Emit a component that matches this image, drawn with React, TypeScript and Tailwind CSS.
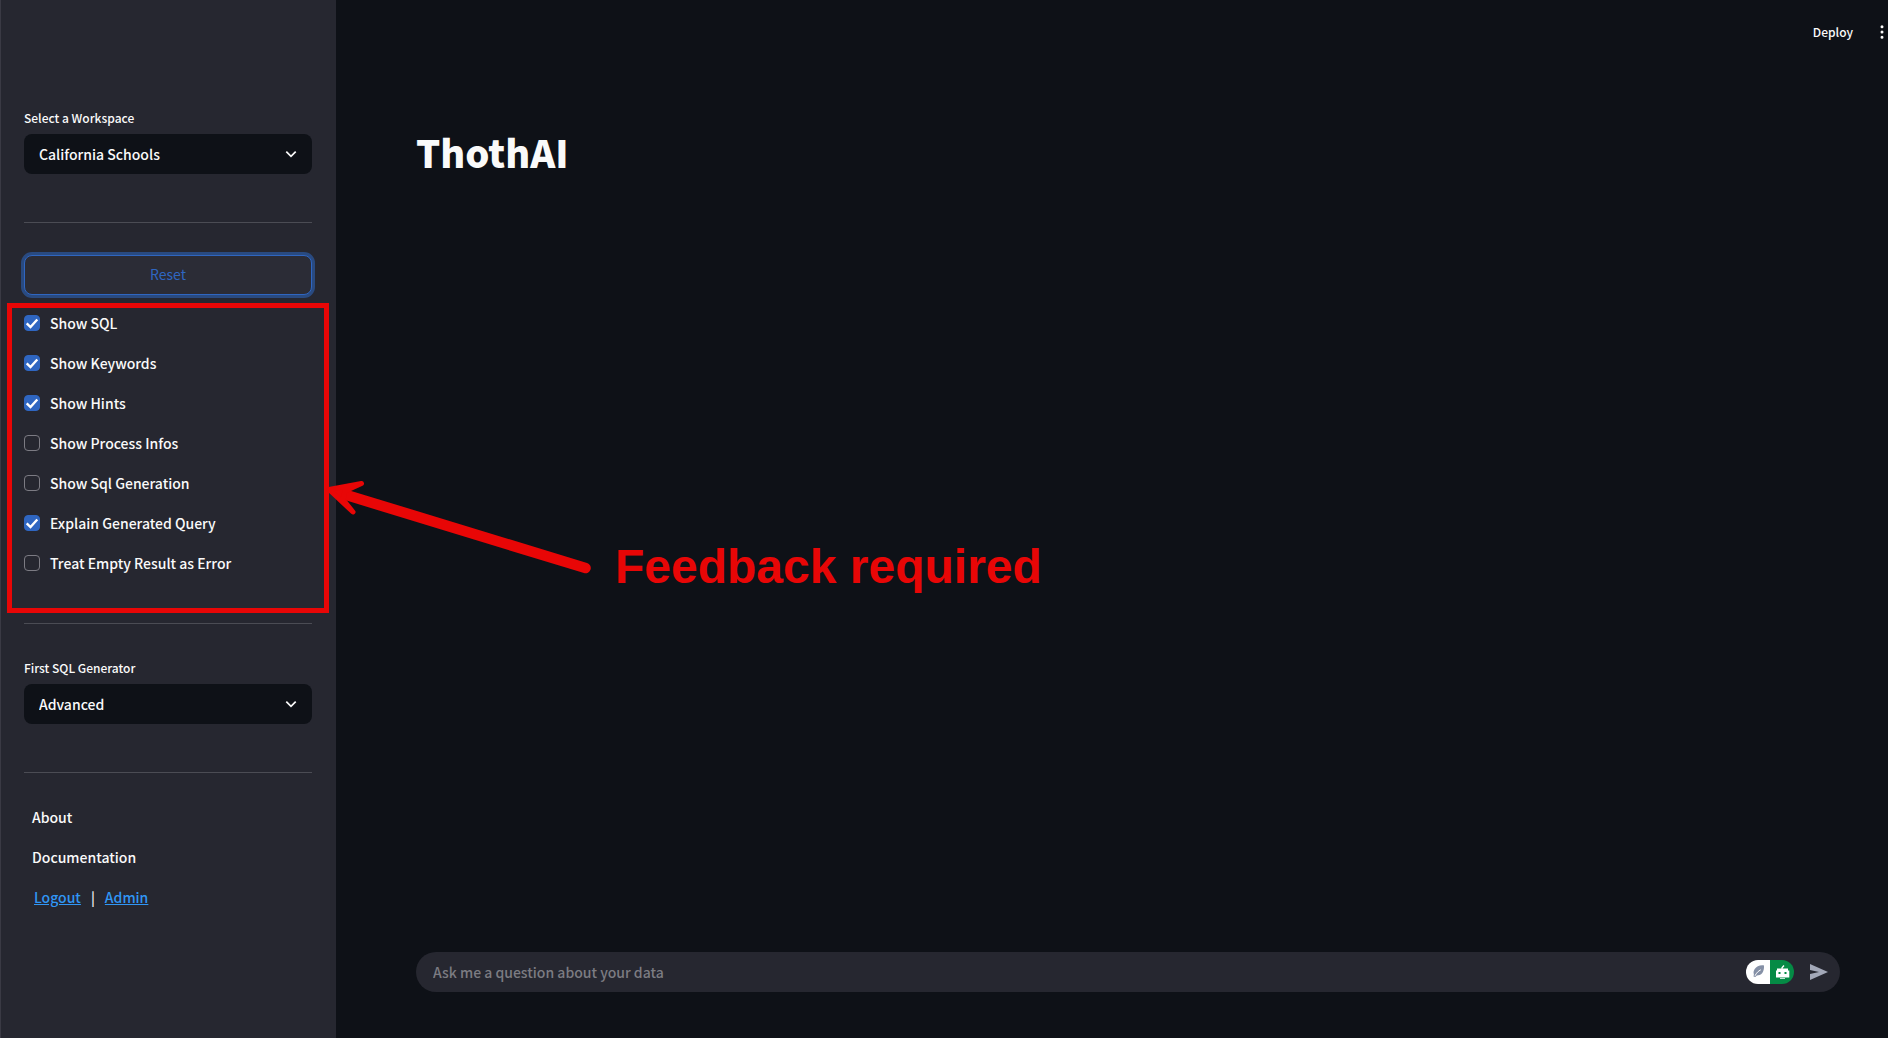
import { useState } from "react";
import { MoreVertical } from "lucide-react";

const options = [
  { label: "Show SQL", on: true },
  { label: "Show Keywords", on: true },
  { label: "Show Hints", on: true },
  { label: "Show Process Infos", on: false },
  { label: "Show Sql Generation", on: false },
  { label: "Explain Generated Query", on: true },
  { label: "Treat Empty Result as Error", on: false },
];

function SelectField({ id, label, value }: { id: string; label: string; value: string }) {
  return (
    <div className="flex flex-col">
      <label htmlFor={id} className="mb-1 flex h-6 items-center text-[12px] leading-5">
        {label}
      </label>
      <div className="relative">
        <select
          id={id}
          defaultValue={value}
          className="h-10 w-full appearance-none rounded-lg bg-[#0e1117] pr-10 pl-[15px] text-[14px]"
        >
          <option>{value}</option>
        </select>
        <svg viewBox="0 0 12 8" className="pointer-events-none absolute top-4 right-[15px] h-2 w-3" aria-hidden="true">
          <path d="M1.3 1.600 6 6.300l4.700-4.700" fill="none" stroke="#fafafa" strokeWidth="1.700" />
        </svg>
      </div>
    </div>
  );
}

function CheckRow({ label, on }: { label: string; on: boolean }) {
  const [checked, setChecked] = useState(on);
  return (
    <label className="flex h-6 items-center gap-[10px]">
      <span className="relative flex h-4 w-4">
        <input
          type="checkbox"
          checked={checked}
          onChange={(e) => setChecked(e.target.checked)}
          className="h-4 w-4 appearance-none rounded border border-[#7c7b83] checked:border-[#2f66c1] checked:bg-[#2f66c1]"
        />
        {checked && (
          <svg viewBox="0 0 16 16" className="pointer-events-none absolute inset-0" aria-hidden="true">
            <path d="M2.700 8.300 6.500 12 13.300 4.500" fill="none" stroke="#fff" strokeWidth="2.400" />
          </svg>
        )}
      </span>
      <span>{label}</span>
    </label>
  );
}

function Assistants() {
  return (
    <svg viewBox="0 0 48 24" className="h-6 w-12" aria-hidden="true">
      <path d="M12 0h12v24H12a12 12 0 0 1 0-24z" fill="#fff" />
      <path d="M24 0h12a12 12 0 0 1 0 24H24z" fill="#058b45" />
      <path d="M18 5.500c-4-.6-7.500.9-9.300 3.500-1.300 1.900-1.400 3.600-.8 5.200l-.4 2.300 1.800.6 1.600-1.600c4.200 0 7.500-3 7.100-10z" fill="#8590a6" />
      <path d="M9 15.800c1.500-3 3.200-4.700 5.800-6M12.500 18.500c.2-1 .2-1.500-.2-2.500" fill="none" stroke="#fff" strokeWidth="1" />
      <path d="M36 9.500 36 7.800 38 5.500" fill="none" stroke="#fff" strokeWidth="1.300" />
      <path d="M31 8.500h11v2h1.300v7H30v-7h1zM34 18h5v.8h-5z" fill="#fff" />
      <path d="M32.500 12h2v2h-2zM38.500 12h2v2h-2z" fill="#058b45" />
    </svg>
  );
}

export default function App() {
  return (
    <div className="relative flex min-h-screen bg-[#0e1117] font-['Noto_Sans_CJK_SC','Noto_Sans',sans-serif] text-[14px] leading-6 font-medium text-[#fafafa]">
      <aside className="flex w-[336px] shrink-0 flex-col border-l border-[#3a3a44] bg-[#262730] pt-[106px] pr-6 pl-[23px]">
        <SelectField id="workspace" label="Select a Workspace" value="California Schools" />
        <hr className="mt-12 mb-8 border-[#4b4c54]" />
        <button
          type="button"
          className="h-10 shrink-0 rounded-lg border border-[#2f66c1] bg-[#2b2c36] pb-0.5 font-normal text-[#2f66c1] ring-3 ring-[#294a80]"
        >
          Reset
        </button>
        <div className="relative mt-4 flex flex-col gap-4">
          {options.map((o) => (
            <CheckRow key={o.label} {...o} />
          ))}
          <div className="pointer-events-none absolute -top-2 -right-[17px] -bottom-[38px] -left-[17px] border-5 border-[#e80606]" />
        </div>
        <hr className="mt-12 mb-8 border-[#4b4c54]" />
        <SelectField id="generator" label="First SQL Generator" value="Advanced" />
        <hr className="mt-12 mb-8 border-[#4b4c54]" />
        <div className="flex flex-col gap-4 px-2">
          <p>About</p>
          <p>Documentation</p>
          <p className="flex gap-[10px] pl-0.5">
            <a href="#logout" className="text-[#3096f5] underline">Logout</a>
            <span>|</span>
            <a href="#admin" className="text-[#3096f5] underline">Admin</a>
          </p>
        </div>
      </aside>
      <main className="flex min-w-0 flex-1 flex-col">
        <header className="flex h-16 items-center justify-end gap-5">
          <button type="button" className="text-[12px]">Deploy</button>
          <button type="button" aria-label="Menu" className="-mr-[3px]">
            <MoreVertical size={18} fill="currentColor" />
          </button>
        </header>
        <h1 className="mt-[62px] ml-20 text-[38px] leading-[52px] font-black">ThothAI</h1>
        <form className="mt-auto mr-12 mb-[46px] ml-20 flex h-10 items-center rounded-full bg-[#262730] pr-3 pl-[17px]" onSubmit={(e) => e.preventDefault()}>
          <input
            type="text"
            aria-label="Question"
            placeholder="Ask me a question about your data"
            className="min-w-0 flex-1 bg-transparent outline-none placeholder:text-[#7c7c82]"
          />
          <Assistants />
          <button type="submit" aria-label="Send" className="ml-4">
            <svg viewBox="0 0 18 16" className="h-4 w-[18px]" aria-hidden="true">
              <path d="M0 0 18 8 0 16V10L9 8 0 6z" fill="#a3a8b8" />
            </svg>
          </button>
        </form>
      </main>
      <div className="pointer-events-none absolute top-[478px] left-[326px] flex">
        <svg viewBox="326 478 268 100" className="h-[100px] w-[268px]" aria-hidden="true">
          <path d="M348 495.500 585.500 568" stroke="#e80606" strokeWidth="10.600" strokeLinecap="round" />
          <path d="M329 489.500 361.500 483.500 345 491 343 499.500 353 512z" fill="#e80606" stroke="#e80606" strokeWidth="5" strokeLinejoin="round" />
        </svg>
      </div>
      <p className="pointer-events-none absolute top-[539px] left-[615px] font-['Liberation_Sans',Arial,sans-serif] text-[48px] leading-[56px] font-bold text-[#e80606]">
        Feedback required
      </p>
    </div>
  );
}
